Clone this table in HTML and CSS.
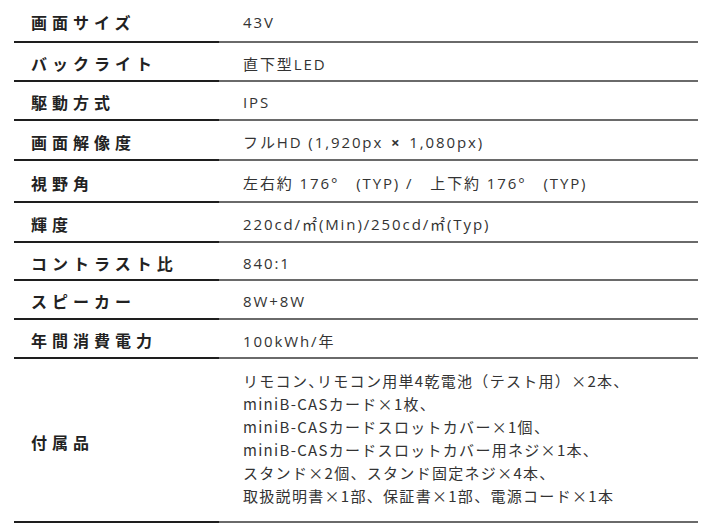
FILE: index.html
```html
<!DOCTYPE html>
<html lang="ja">
<head>
<meta charset="utf-8">
<link rel="stylesheet" href="styles.css">
</head>
<body>
<div class="spec">
  <div class="label">画面サイズ</div><div class="value">43V</div>
  <div class="label">バックライト</div><div class="value">直下型LED</div>
  <div class="label">駆動方式</div><div class="value">IPS</div>
  <div class="label">画面解像度</div><div class="value">フルHD (1,920px <b class="x">×</b> 1,080px)</div>
  <div class="label">視野角</div><div class="value">左右約 176°　(TYP) /　上下約 176°　(TYP)</div>
  <div class="label">輝度</div><div class="value">220cd/㎡(Min)/250cd/㎡(Typ)</div>
  <div class="label">コントラスト比</div><div class="value">840:1</div>
  <div class="label">スピーカー</div><div class="value">8W+8W</div>
  <div class="label">年間消費電力</div><div class="value">100kWh/年</div>
  <div class="label">付属品</div>
  <div class="value multi">リモコン<span class="h">、</span>リモコン用単4乾電池（テスト用）×2本、<br>miniB-CASカード×1枚、<br>miniB-CASカードスロットカバー×1個、<br>miniB-CASカードスロットカバー用ネジ×1本、<br>スタンド×2個、スタンド固定ネジ×4本、<br>取扱説明書×1部、保証書×1部、電源コード×1本</div>
</div>
</body>
</html>
```

FILE: styles.css
```css
html, body {
  margin: 0;
  padding: 0;
  background: #fff;
}
body {
  font-family: "Noto Sans CJK JP", "Noto Sans", sans-serif;
}
.spec {
  display: grid;
  grid-template-columns: 205px 479px;
  grid-template-rows: 43px 39px 39px 40px 42px 40px 38px 39px 39px 164px;
  margin-left: 14px;
}
.label, .value {
  box-sizing: border-box;
  display: flex;
  align-items: center;
  padding-top: 3px;
}
.label {
  border-bottom: 2px solid #1e1e1e;
  padding-left: 17px;
  font-size: 16px;
  font-weight: 700;
  letter-spacing: 5px;
  color: #222;
}
.value {
  border-bottom: 2px solid #6a6a6a;
  padding-left: 24px;
  font-family: "Open Sans", "Noto Sans CJK JP", sans-serif;
  font-size: 15px;
  letter-spacing: 1.9px;
  color: #333;
  white-space: pre;
}
.x {
  font-weight: 700;
  margin: 0 2px;
}
.multi {
  display: block;
  padding-top: 10px;
  font-family: "Noto Sans CJK JP", sans-serif;
  line-height: 23px;
  letter-spacing: 1.3px;
  white-space: normal;
}
.h {
  font-feature-settings: "halt";
}
```
